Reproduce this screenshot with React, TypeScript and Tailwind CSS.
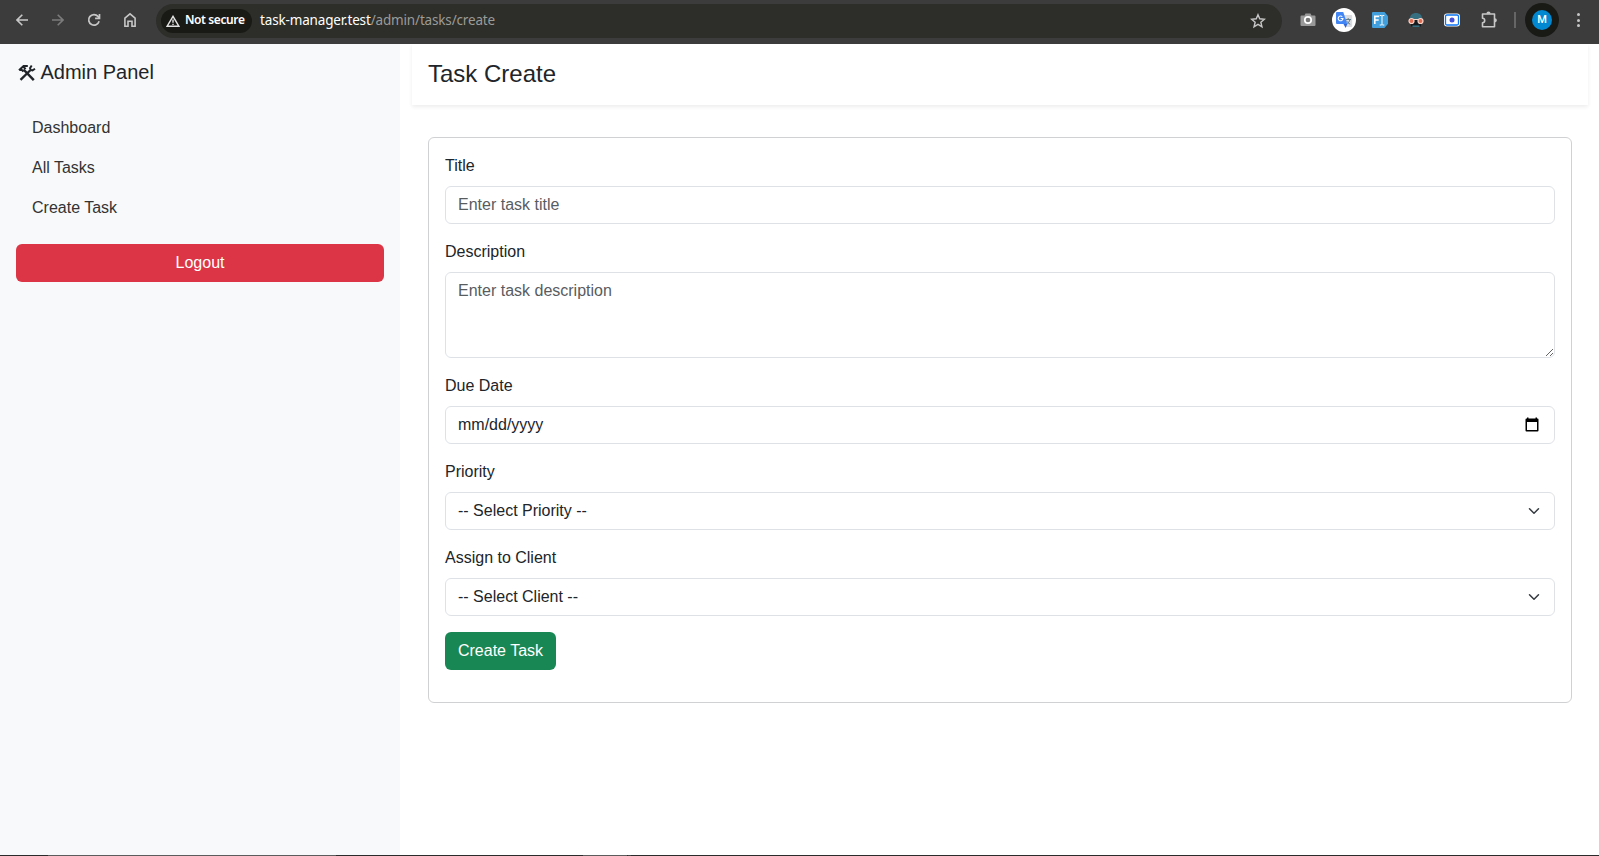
import type { ReactNode } from "react";

const chrome = "#c7c7c7";

function BackIcon({ color, flip }: { color: string; flip?: boolean }) {
  return (
    <svg width="12" height="12" viewBox="0 0 12 12" fill="none" stroke={color} strokeWidth="1.6" className={flip ? "rotate-180" : ""}>
      <path d="M12 6H1.2M6.3 0.7 1 6l5.3 5.3" />
    </svg>
  );
}

function ReloadIcon() {
  return (
    <svg width="14" height="14" viewBox="0 0 14 14" fill="none" stroke={chrome} strokeWidth="1.7">
      <path d="M12.1 8.3A5.3 5.3 0 1 1 11 3.4l1.4 1.7" />
      <path d="M12.5 1v4.4H8.1" />
    </svg>
  );
}

function HomeIcon() {
  return (
    <svg width="14" height="16" viewBox="0 0 14 16" fill="none" stroke={chrome} strokeWidth="1.6">
      <path d="M1.9 14.2V6.1L7 1.8l5.1 4.3v8.1H9V9.3H5v4.9z" />
    </svg>
  );
}

function WarningIcon() {
  return (
    <svg width="14" height="12" viewBox="0 0 14 12" fill="none" stroke="#e3e3e3" strokeWidth="1.4">
      <path d="M7 1.3 1.2 11.2h11.6z" />
      <path d="M7 4.6v3.2M7 8.7v1.3" />
    </svg>
  );
}

function StarIcon() {
  return (
    <svg width="16" height="16" viewBox="0 0 16 16" fill="none" stroke={chrome} strokeWidth="1.4">
      <path d="m8 1.7 1.75 4.1 4.7.4-3.6 3.050 1.1 4.550L8 11.4l-3.950 2.400 1.100-4.550L1.550 6.2 6.25 5.800z" />
    </svg>
  );
}

function CameraIcon() {
  return (
    <svg width="16" height="14" viewBox="0 0 16 14">
      <path d="M1.500 2.500h3L5.500.500h5l1 2h3a1 1 0 0 1 1 1V12a1 1 0 0 1-1 1h-13a1 1 0 0 1-1-1V3.500a1 1 0 0 1 1-1z" fill="#999" />
      <circle cx="8" cy="7" r="3.200" fill="#777" stroke="#fff" strokeWidth="1.700" />
    </svg>
  );
}

function TranslateIcon() {
  return (
    <svg width="24" height="24" viewBox="0 0 24 24">
      <circle cx="12" cy="12" r="12" fill="#fff" />
      <path d="M11 7h8.200a1 1 0 0 1 1 1v10a1 1 0 0 1-1 1h-5z" fill="#dadce0" />
      <path d="M13.500 11.500h5.500M16.200 10v1.500M18 11.500c-.5 2.200-2 3.600-3.300 4.500M14.500 12.700c.7 1.500 2 2.600 3.700 3.500" fill="none" stroke="#607d8b" strokeWidth="1" />
      <path d="m11.500 16 3.800 0-1.700 4z" fill="#3367d6" />
      <path d="M5 4h6.200l4.100 12H5a1 1 0 0 1-1-1V5a1 1 0 0 1 1-1z" fill="#4285f4" />
      <path d="M10.300 8.700A2.400 2.400 0 1 0 11 10.500H8.700" fill="none" stroke="#fff" strokeWidth="1.100" />
    </svg>
  );
}

function FontIcon() {
  return (
    <svg width="16" height="16" viewBox="0 0 16 16">
      <path d="M1 0h11.500L16 4.300v7.400L12.500 16H1a1 1 0 0 1-1-1V1a1 1 0 0 1 1-1z" fill="#419fdd" />
      <path d="M2.800 12V4.400h4.400M2.800 8h3.900" fill="none" stroke="#fff" strokeWidth="1.600" />
      <path d="M7.700 3.500h1.500l.8.500.8-.5h1.500M10 4v8.500M7.700 13h1.500l.8-.5.8.5h1.500" fill="none" stroke="#fff" strokeWidth="1" />
    </svg>
  );
}

function GogglesIcon() {
  return (
    <svg width="16" height="16" viewBox="0 0 16 16">
      <path d="M1.800 7C1.800 3 4.500 1 8 1s6.200 2 6.200 6z" fill="#356f80" />
      <path d="M2.500 8h11l-.5 6.500H3z" fill="#171b1f" />
      <path d="M4.500 14.200h7" stroke="#356f80" strokeWidth="1.600" />
      <circle cx="3.500" cy="9" r="2.500" fill="#df6b51" stroke="#f5d5ca" strokeWidth="1.200" />
      <circle cx="12.500" cy="9" r="2.500" fill="#df6b51" stroke="#f5d5ca" strokeWidth="1.200" />
      <path d="M6 7.500h4" stroke="#f5d5ca" strokeWidth="1" />
    </svg>
  );
}

function RecorderIcon() {
  return (
    <svg width="16" height="14" viewBox="0 0 16 14">
      <rect x="0" y="0.500" width="16" height="13" rx="3" fill="#fff" />
      <rect x="1.500" y="2" width="13" height="10" rx="1.500" fill="#fff" stroke="#0b75f5" strokeWidth="1.300" />
      <circle cx="8" cy="7" r="2.500" fill="#4550d8" />
    </svg>
  );
}

function PuzzleIcon() {
  return (
    <svg width="17" height="17" viewBox="0 0 17 17" fill="none" stroke={chrome} strokeWidth="1.600">
      <path d="M1.500 3h12v12.700h-12v-4a2.200 2.200 0 0 0 0-4.400z" strokeLinejoin="round" />
      <path d="M5.400 2.700a2.100 2.200 0 0 1 4.200 0zM13.700 7.200a2.200 2.100 0 0 1 0 4.200z" fill={chrome} stroke="none" />
    </svg>
  );
}

function BrowserBar() {
  return (
    <header className="flex h-11 shrink-0 items-center bg-[#3c3c3c] pb-1 font-['Noto_Sans','Open_Sans',sans-serif]">
      <div className="flex w-[156px] items-center pl-4">
        <span className="flex w-9 shrink-0"><BackIcon color={chrome} /></span>
        <span className="flex w-[35px] shrink-0"><BackIcon color="#7b7b7b" flip /></span>
        <span className="flex w-9 shrink-0"><ReloadIcon /></span>
        <span className="flex shrink-0"><HomeIcon /></span>
      </div>
      <div className="mt-px flex h-[34px] w-[1126px] shrink-0 items-center rounded-full bg-[#2d2e29] pl-[5px]">
        <div className="flex h-6 w-[91px] shrink-0 items-center gap-[5px] rounded-full bg-[#191a16] pl-[5px] text-[12px] font-semibold whitespace-nowrap text-white">
          <WarningIcon />
          <span className="relative -top-px tracking-[-0.4px]">Not secure</span>
        </div>
        <p className="ml-2 text-[13.5px] tracking-[-0.16px] whitespace-nowrap text-[#9b9b98]">
          <span className="text-white">task-manager.test</span>/admin/tasks/create
        </p>
        <span className="mr-4 ml-auto"><StarIcon /></span>
      </div>
      <div className="ml-[18px] flex items-center">
        <span className="flex w-8"><CameraIcon /></span>
        <span className="flex w-10"><TranslateIcon /></span>
        <span className="flex w-9"><FontIcon /></span>
        <span className="flex w-9"><GogglesIcon /></span>
        <span className="flex w-9"><RecorderIcon /></span>
        <span className="flex w-[34px] pb-0.5 pl-px"><PuzzleIcon /></span>
        <span className="h-4 w-0.5 bg-[#666]" />
        <span className="ml-[9px] flex size-[34px] items-center justify-center rounded-full bg-[#191a16]">
          <span className="flex size-5 items-center justify-center rounded-full bg-[#0288d1] pt-px font-[Roboto,sans-serif] text-[11px] font-medium text-white">M</span>
        </span>
        <span className="ml-[18px] flex flex-col gap-[2.5px]">
          <i className="size-[3px] rounded-full bg-[#c7c7c7]" />
          <i className="size-[3px] rounded-full bg-[#c7c7c7]" />
          <i className="size-[3px] rounded-full bg-[#c7c7c7]" />
        </span>
      </div>
    </header>
  );
}

function ToolsIcon() {
  return (
    <svg width="18" height="18" viewBox="0 0 18 18" fill="none" stroke="#212529" className="mt-0.5">
      <path d="m5.500 5.500 10.300 10.700" strokeWidth="2.500" />
      <path d="M1 6.300 5.600 2h4.200M2.700 4.700l2.700 3M5.300 2.500l2.300 2.700" strokeWidth="2" />
      <path d="m12.300 6.300-9.800 9.600" strokeWidth="2.300" />
      <path d="M13.700 1.500 12 4.200l.7 1.700 1.800.5 2.500-1.700" strokeWidth="1.900" />
    </svg>
  );
}

function Sidebar() {
  return (
    <aside className="w-[400px] shrink-0 bg-[#f8f9fa] p-4">
      <h4 className="flex h-6 items-center gap-[5px] pl-[1.5px] text-[20px] leading-6"><ToolsIcon />Admin Panel</h4>
      <nav className="mt-6 flex flex-col text-[#333]">
        {["Dashboard", "All Tasks", "Create Task"].map((item) => (
          <a key={item} className="h-10 px-4 py-2 leading-6">{item}</a>
        ))}
      </nav>
      <button className="mt-4 h-[38px] w-full rounded-md bg-[#dc3545] text-white">Logout</button>
    </aside>
  );
}

const control = "block w-full rounded-md border border-[#dee2e6] bg-white px-3 leading-6 text-[#212529] placeholder:text-[#595c5f]";

function Field({ label, children }: { label: string; children: ReactNode }) {
  return (
    <div className="mb-4">
      <label className="mb-2 block leading-6">{label}</label>
      {children}
    </div>
  );
}

function SelectBox({ text }: { text: string }) {
  return (
    <div className={`${control} flex h-[38px] items-center justify-between`}>
      <span>{text}</span>
      <svg width="16" height="12" viewBox="0 0 16 16" fill="none" stroke="#343a40" strokeWidth="2" strokeLinecap="round" strokeLinejoin="round">
        <path d="m2 5 6 6 6-6" />
      </svg>
    </div>
  );
}

export default function App() {
  return (
    <div className="flex h-[856px] flex-col overflow-hidden bg-white font-['Liberation_Sans',Arial,sans-serif] text-base text-[#212529]">
      <BrowserBar />
      <div className="flex min-h-0 flex-1 overflow-hidden">
        <Sidebar />
        <main className="min-w-0 flex-1 pr-[11px] pl-3">
          <div className="h-[61px] px-4 pt-[15px] shadow-[0_2px_4px_rgba(0,0,0,0.075)]">
            <h1 className="text-[24px] leading-[29px]">Task Create</h1>
          </div>
          <form className="mx-4 mt-8 h-[566px] rounded-md border border-[#d0d1d2] p-4">
            <Field label="Title">
              <input className={`${control} h-[38px]`} placeholder="Enter task title" />
            </Field>
            <Field label="Description">
              <textarea className={`${control} h-[86px] resize-y py-1.5`} placeholder="Enter task description" />
            </Field>
            <Field label="Due Date">
              <div className={`${control} flex h-[38px] items-center justify-between`}>
                <span>mm/dd/yyyy</span>
                <svg width="14" height="15" viewBox="0 0 14 15" className="mr-[3px] mb-px">
                  <path d="M2 .5h1.500v1h7v-1H12v1h.5a1 1 0 0 1 1 1v11a1 1 0 0 1-1 1h-11a1 1 0 0 1-1-1v-11a1 1 0 0 1 1-1H2zM2 5v8h10V5z" fill="#000" fillRule="evenodd" />
                </svg>
              </div>
            </Field>
            <Field label="Priority"><SelectBox text="-- Select Priority --" /></Field>
            <Field label="Assign to Client"><SelectBox text="-- Select Client --" /></Field>
            <button type="button" className="h-[38px] w-[111px] rounded-md bg-[#198754] text-white">Create Task</button>
          </form>
        </main>
      </div>
      <div className="flex h-px shrink-0 bg-[#2b2b2b]">
        <div className="ml-12 w-72 bg-[#5c5c5c]" />
        <div className="ml-[247px] w-11 bg-[#5c5c5c]" />
        <div className="ml-px w-[3px] bg-[#444]" />
      </div>
    </div>
  );
}
